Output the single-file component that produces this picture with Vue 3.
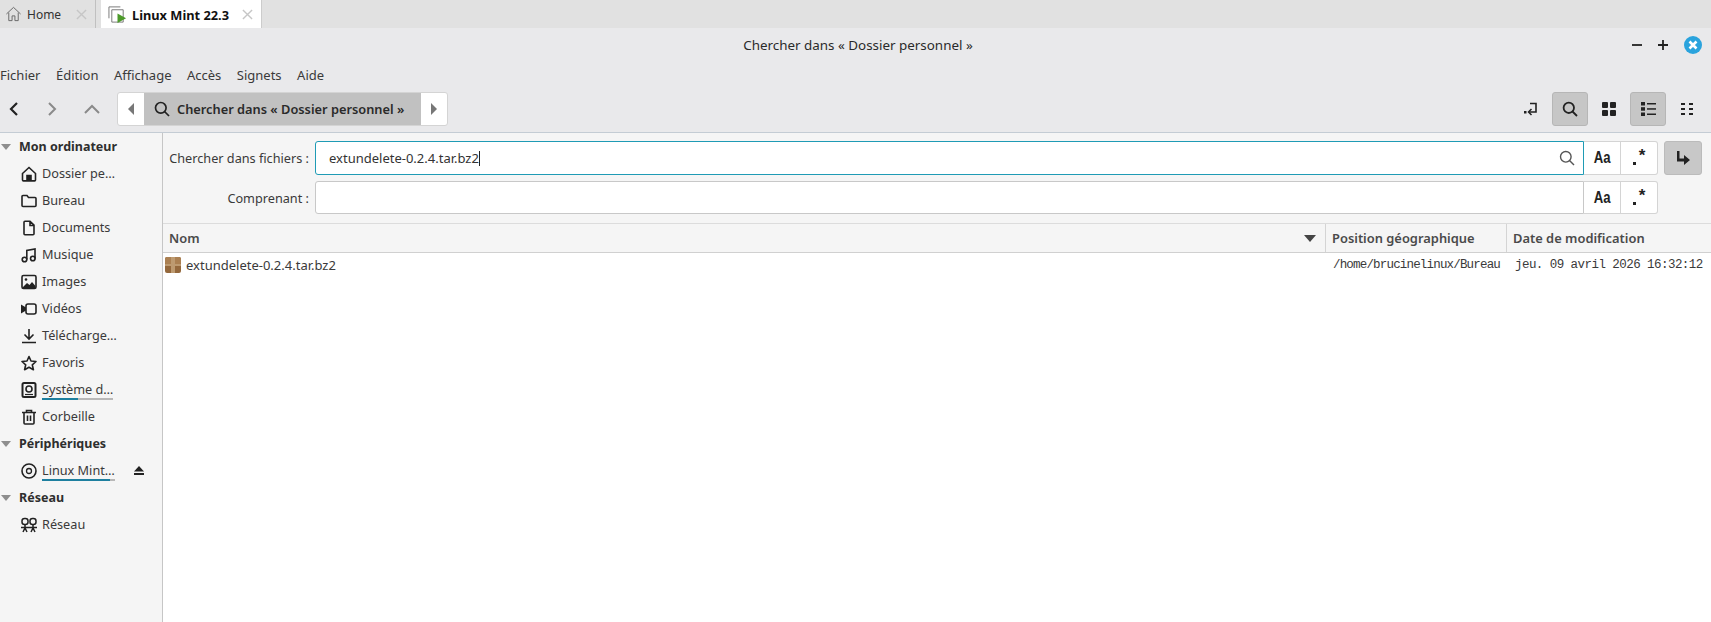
<script setup>
const menus = ['Fichier', 'Édition', 'Affichage', 'Accès', 'Signets', 'Aide']
const places = [
  { label: 'Dossier pe…', icon: 'home' },
  { label: 'Bureau', icon: 'folder' },
  { label: 'Documents', icon: 'doc' },
  { label: 'Musique', icon: 'music' },
  { label: 'Images', icon: 'image' },
  { label: 'Vidéos', icon: 'video' },
  { label: 'Télécharge…', icon: 'download' },
  { label: 'Favoris', icon: 'star' },
  { label: 'Système d…', icon: 'disk', usage: 50 },
  { label: 'Corbeille', icon: 'trash' },
]
</script>

<template>
  <div class="win">
    <div class="tabs">
      <div class="tab home-tab">
        <svg class="ti" viewBox="0 0 18 18" fill="none" stroke="#666" stroke-width="1"><path d="M1.5 9 9 2l7.5 7M4 7.500V16h3.500v-5h3v5H14V7.500"/></svg>
        <span>Home</span>
        <svg class="x" viewBox="0 0 12 12" stroke="#c6c6c6" stroke-width="1.5"><path d="M1 1l10 10M11 1 1 11"/></svg>
      </div>
      <div class="tab active-tab">
        <svg class="ti" viewBox="0 0 20 20" fill="none"><path d="M1 14V2h12" stroke="#777"/><path d="M4 18V5h12v13z" stroke="#777" fill="#fff"/><path d="M10 9l9 5-9 5z" fill="#4c9a2a"/></svg>
        <b>Linux Mint 22.3</b>
        <svg class="x" viewBox="0 0 12 12" stroke="#c6c6c6" stroke-width="1.5"><path d="M1 1l10 10M11 1 1 11"/></svg>
      </div>
    </div>

    <div class="title">
      <span class="title-text">Chercher dans « Dossier personnel »</span>
      <div class="wm">
        <svg viewBox="0 0 10 10" width="10" height="10" stroke="#222" stroke-width="1.8"><path d="M0 5h10"/></svg>
        <svg viewBox="0 0 10 10" width="10" height="10" stroke="#222" stroke-width="1.8"><path d="M0 5h10M5 0v10"/></svg>
        <svg viewBox="0 0 18 18" width="18" height="18"><circle cx="9" cy="9" r="9" fill="#2aa3dd"/><path d="M5.500 5.500l7 7M12.500 5.500l-7 7" stroke="#fff" stroke-width="2.6"/></svg>
      </div>
    </div>

    <div class="menubar"><span v-for="m in menus" :key="m">{{ m }}</span></div>

    <div class="toolbar">
      <div class="nav">
        <svg viewBox="0 0 12 16" width="12" height="16" fill="none" stroke="#222" stroke-width="2.2"><path d="M9 2 3 8l6 6"/></svg>
        <svg viewBox="0 0 12 16" width="12" height="16" fill="none" stroke="#8a8a8a" stroke-width="2"><path d="M3 2l6 6-6 6"/></svg>
        <svg viewBox="0 0 16 10" width="16" height="10" fill="none" stroke="#8a8a8a" stroke-width="2"><path d="M1 9l7-7 7 7"/></svg>
      </div>
      <div class="crumbs">
        <div class="arrow"><svg viewBox="0 0 6 12" width="6" height="12" fill="#777"><path d="M6 0v12L0 6z"/></svg></div>
        <div class="crumb">
          <svg viewBox="0 0 16 16" width="16" height="16" fill="none" stroke="#222" stroke-width="1.7"><circle cx="6.800" cy="6.800" r="5.300"/><path d="M10.500 10.500 15 15"/></svg>
          <span>Chercher dans « Dossier personnel »</span>
        </div>
        <div class="arrow"><svg viewBox="0 0 6 12" width="6" height="12" fill="#777"><path d="M0 0v12l6-6z"/></svg></div>
      </div>
      <div class="tools">
        <button class="tbtn plain"><svg viewBox="0 0 16 16" width="16" height="16" fill="none" stroke="#222" stroke-width="1.6"><path d="M7 2.500h6v8.500H6"/><path d="M8.500 8 5.500 11l3 3" stroke-width="1.5"/><path d="M1 10h2.500v2.500H1z" fill="#222" stroke="none"/></svg></button>
        <button class="tbtn on"><svg viewBox="0 0 16 16" width="16" height="16" fill="none" stroke="#222" stroke-width="1.8"><circle cx="6.800" cy="6.800" r="5.200"/><path d="M10.500 10.500 15 15"/></svg></button>
        <button class="tbtn plain"><svg viewBox="0 0 14 14" width="14" height="14" fill="#222"><rect width="6" height="6" rx="1"/><rect x="8" width="6" height="6" rx="1"/><rect y="8" width="6" height="6" rx="1"/><rect x="8" y="8" width="6" height="6" rx="1"/></svg></button>
        <button class="tbtn on"><svg viewBox="0 0 15 14" width="15" height="14" fill="#222"><rect width="4" height="3.500"/><rect y="5.200" width="4" height="3.500"/><rect y="10.500" width="4" height="3.500"/><rect x="6" y="1" width="9" height="1.500"/><rect x="6" y="6.200" width="9" height="1.500"/><rect x="6" y="11.500" width="9" height="1.500"/></svg></button>
        <button class="tbtn plain"><svg viewBox="0 0 13 12" width="13" height="12" fill="#222"><rect width="4" height="2"/><rect x="8" width="4" height="2"/><rect y="5" width="4" height="2"/><rect x="8" y="5" width="4" height="2"/><rect y="10" width="4" height="2"/><rect x="8" y="10" width="4" height="2"/></svg></button>
      </div>
    </div>

    <div class="body">
      <aside class="side">
        <div class="head"><i class="tri"></i>Mon ordinateur</div>
        <div v-for="p in places" :key="p.label" class="row">
          <svg class="ic" viewBox="0 0 16 16" fill="none" stroke="#222" stroke-width="1.6">
            <template v-if="p.icon === 'home'"><path d="M1.500 7.500 8 1.500l6.500 6V14a.9.9 0 0 1-.9.9H2.400a.9.9 0 0 1-.9-.9z"/><path d="M6 15V9.500h4V15" fill="#222"/></template>
            <path v-else-if="p.icon === 'folder'" d="M1 3.500a1 1 0 0 1 1-1h4l1.500 2H14a1 1 0 0 1 1 1v7a1 1 0 0 1-1 1H2a1 1 0 0 1-1-1z"/>
            <path v-else-if="p.icon === 'doc'" d="M3 2.200a1 1 0 0 1 1-1h5l4 4v8.600a1 1 0 0 1-1 1H4a1 1 0 0 1-1-1zM9 1.500v4h4"/>
            <template v-else-if="p.icon === 'music'"><circle cx="3.500" cy="12.500" r="2.300"/><circle cx="11.800" cy="11.500" r="2.300"/><path d="M5.800 12.500V3.500L14 2v9.500"/></template>
            <template v-else-if="p.icon === 'image'"><rect x="1" y="1.500" width="14" height="13" rx="1.500"/><circle cx="5" cy="5.500" r="1.300" fill="#222" stroke="none"/><path d="M2 13l4-4 2.500 2 2.500-3 3.500 4v2H2z" fill="#222" stroke="none"/></template>
            <template v-else-if="p.icon === 'video'"><rect x="5" y="3" width="10" height="10" rx="2"/><path d="M0 3.500l5 3v3l-5 3z" fill="#222" stroke="none"/></template>
            <path v-else-if="p.icon === 'download'" d="M8 1v9.500M3.500 6.500 8 11l4.500-4.500M1 14.500h14"/>
            <path v-else-if="p.icon === 'star'" d="M8 1.500l2 4.500 5 .5-3.700 3.300 1.100 4.900L8 12.200l-4.400 2.500 1.100-4.900L1 6.500 6 6z" stroke-linejoin="round"/>
            <template v-else-if="p.icon === 'disk'"><rect x="1.500" y="1" width="13" height="14" rx="1.500" stroke-width="2"/><circle cx="8" cy="7" r="3"/><path d="M4 12.500h8" stroke-width="1.2"/></template>
            <path v-else d="M1 3.500h14M5.500 3.500V1.500h5v2M3 3.500V14a1 1 0 0 0 1 1h8a1 1 0 0 0 1-1V3.500M6.500 6.500v5.500M9.500 6.500v5.500"/>
          </svg>
          <span class="lbl">{{ p.label }}<em v-if="p.usage" class="use"><u :style="{ width: p.usage + '%' }"></u></em></span>
        </div>
        <div class="head"><i class="tri"></i>Périphériques</div>
        <div class="row">
          <svg class="ic" viewBox="0 0 16 16" fill="none" stroke="#222" stroke-width="1.6"><circle cx="8" cy="8" r="7"/><circle cx="8" cy="8" r="2.500" stroke-width="1.3"/></svg>
          <span class="lbl">Linux Mint…<em class="use"><u style="width: 94%"></u></em></span>
          <svg class="eject" viewBox="0 0 10 9" width="10" height="9" fill="#222"><path d="M5 0l5 5.500H0z"/><rect y="7" width="10" height="2"/></svg>
        </div>
        <div class="head"><i class="tri"></i>Réseau</div>
        <div class="row">
          <svg class="ic" viewBox="0 0 16 16" fill="none" stroke="#222" stroke-width="1.5"><rect x="1" y="1.500" width="6" height="6" rx="2.500"/><rect x="9" y="1.500" width="6" height="6" rx="2.500"/><path d="M4 7.500v3M12 7.500v3M0 10.500h16M2 15l2-4 2 4M10 15l2-4 2 4"/></svg>
          <span class="lbl">Réseau</span>
        </div>
      </aside>

      <main class="main">
        <div class="search">
          <div class="sline first">
            <label>Chercher dans fichiers :</label>
            <div class="field focus">
              <span class="val">extundelete-0.2.4.tar.bz2<i class="caret"></i></span>
              <svg viewBox="0 0 16 16" width="16" height="16" fill="none" stroke="#555" stroke-width="1.4"><circle cx="6.800" cy="6.800" r="5.300"/><path d="M10.500 10.500 15 15"/></svg>
            </div>
            <div class="opt"><span class="aa">Aa</span></div><div class="opt last"><span class="dot"></span><span class="star">*</span></div>
            <button class="go"><svg viewBox="0 0 14 14" width="14" height="14" fill="#222"><path d="M1 0h2.500v7.500H8V4l6 5-6 5v-3.500H1z"/></svg></button>
          </div>
          <div class="sline">
            <label>Comprenant :</label>
            <div class="field"></div>
            <div class="opt"><span class="aa">Aa</span></div><div class="opt last"><span class="dot"></span><span class="star">*</span></div>
            <span class="go-space"></span>
          </div>
        </div>
        <div class="cols">
          <div class="col c1"><span>Nom</span><svg viewBox="0 0 12 7" width="12" height="7" fill="#444"><path d="M0 0h12L6 7z"/></svg></div>
          <div class="col c2">Position géographique</div>
          <div class="col c3">Date de modification</div>
        </div>
        <div class="file">
          <div class="c1 cell">
            <svg class="pkg" viewBox="0 0 16 16"><rect width="16" height="16" rx="2" fill="#94683c"/><rect width="16" height="8" rx="2" fill="#ab8052"/><rect x="6" width="4" height="16" fill="#bd9a70"/><rect y="7" width="16" height="2" fill="#bd9a70"/></svg>
            <span>extundelete-0.2.4.tar.bz2</span>
          </div>
          <div class="c2 cell mono path">/home/brucinelinux/Bureau</div>
          <div class="c3 cell mono date">jeu. 09 avril 2026 16:32:12</div>
        </div>
      </main>
    </div>
  </div>
</template>

<style>
html, body { margin: 0; background: #fff; }
</style>
<style scoped>
.win { width: 1711px; height: 622px; display: flex; flex-direction: column; overflow: hidden; background: #e9e9eb; color: #2e2e2e; font: 13px "Noto Sans", sans-serif; }
.tabs { height: 28px; background: #e1e1e1; display: flex; align-items: flex-start; flex: none; }
.tab { display: flex; align-items: center; box-sizing: border-box; }
.home-tab { width: 96px; height: 28px; padding-left: 5px; border-right: 1px solid #c0c0c0; margin-right: 5px; color: #333; font-size: 12px; gap: 5px; }
.active-tab { width: 161px; height: 29px; padding-left: 7px; background: #fff; border-right: 1px solid #ccc; font-size: 12.8px; color: #111; gap: 5px; position: relative; }
.ti { width: 17px; height: 18px; flex: none; }
.active-tab .ti { width: 19px; height: 19px; }
.x { width: 11px; height: 11px; flex: none; margin-left: auto; margin-right: 8px; }
.title { height: 32px; flex: none; display: flex; align-items: center; justify-content: center; position: relative; background: #e9e9eb; padding-left: 5px; box-sizing: border-box; }
.title-text { font-size: 13.4px; color: #2a2a2a; padding-top: 1px; }
.wm { position: absolute; right: 9px; top: 8px; display: flex; align-items: center; gap: 16px; }
.menubar { height: 31px; flex: none; display: flex; align-items: center; gap: 15.5px; font-size: 13px; color: #3a3a3a; padding-bottom: 2px; box-sizing: border-box; }
.toolbar { height: 42px; flex: none; display: flex; align-items: center; border-bottom: 1px solid #c4ccd4; padding-bottom: 5px; box-sizing: border-box; }
.nav { width: 117px; display: flex; align-items: center; padding-left: 8px; box-sizing: border-box; gap: 26px; flex: none; }
.crumbs { height: 34px; width: 331px; display: flex; align-items: stretch; background: #fff; border-radius: 3px; border: 1px solid #d4d4d4; box-sizing: border-box; flex: none; }
.arrow { width: 26px; display: flex; align-items: center; justify-content: center; flex: none; }
.crumb { flex: 1; background: #c1c1c1; display: flex; align-items: center; gap: 7px; padding-left: 10px; font-weight: 600; font-size: 12.8px; color: #2a2a2a; white-space: nowrap; }
.tools { margin-left: auto; margin-right: 6px; display: flex; align-items: center; gap: 3px; }
.tbtn { width: 36px; height: 34px; border: 1px solid transparent; background: none; border-radius: 3px; display: flex; align-items: center; justify-content: center; padding: 0; box-sizing: border-box; }
.tbtn.on { background: #c6c6c6; border-color: #b6b6b6; }
.body { flex: 1; display: flex; min-height: 0; background: #fff; }
.side { width: 163px; flex: none; box-sizing: border-box; background: #f5f5f5; border-right: 1px solid #c6c6c6; }
.head { height: 27px; display: flex; align-items: center; font-weight: 700; font-size: 12.5px; color: #2e2e2e; }
.tri { width: 0; height: 0; border: 5px solid transparent; border-top: 6px solid #8e8e8e; border-bottom: 0; margin: 0 8px 0 1px; }
.row { height: 27px; display: flex; align-items: center; padding-left: 21px; color: #3a3a3a; font-size: 12.7px; position: relative; }
.ic { width: 16px; height: 16px; flex: none; margin-right: 5px; }
.lbl { white-space: nowrap; position: relative; margin-top: -1px; }
.use { position: absolute; left: 0; right: 0; bottom: -2px; height: 2px; background: #b8b8b8; display: block; }
.use u { display: block; height: 2px; background: #1d7f9f; }
.eject { position: absolute; left: 134px; top: 9px; }
.main { flex: 1; min-width: 0; display: flex; flex-direction: column; }
.search { background: #f5f5f5; height: 90px; flex: none; box-sizing: border-box; padding-top: 8px; display: flex; flex-direction: column; gap: 6px; }
.sline { display: flex; height: 33px; align-items: stretch; padding-right: 9px; }
.sline.first { height: 34px; }
.sline label { width: 152px; flex: none; display: flex; align-items: center; justify-content: flex-end; font-size: 12.7px; color: #3a3a3a; padding-right: 6px; box-sizing: border-box; white-space: nowrap; }
.field { flex: 1; background: #fff; border: 1px solid #c8c8c8; border-radius: 3px 0 0 3px; display: flex; align-items: center; justify-content: space-between; padding: 0 8px 0 13px; box-sizing: border-box; }
.field.focus { border-color: #1f9bb5; }
.val { font-size: 13px; color: #333; }
.caret { display: inline-block; width: 1px; height: 15px; background: #222; vertical-align: -3px; }
.opt { width: 37px; background: #fff; border: 1px solid #d4d4d4; border-left: 0; display: flex; align-items: center; justify-content: center; color: #222; box-sizing: border-box; flex: none; position: relative; }
.opt.last { border-radius: 0 3px 3px 0; }
.aa { display: inline-block; font: 600 16px "Liberation Sans", sans-serif; transform: scaleX(.82); }
.dot { width: 3px; height: 3px; background: #222; margin: 11px 3px 0 0; }
.star { font: 700 17px "Liberation Sans", sans-serif; line-height: 1; margin-top: -5px; }
.go { width: 38px; margin-left: 6px; background: #c8c8c8; border: 1px solid #bbb; border-radius: 3px; display: flex; align-items: center; justify-content: center; padding: 0; box-sizing: border-box; flex: none; }
.go-space { width: 38px; margin-left: 6px; flex: none; }
.cols { height: 30px; flex: none; display: flex; background: #f5f5f5; border-top: 1px solid #dcdcdc; border-bottom: 1px solid #d0d0d0; box-sizing: border-box; font-weight: 600; font-size: 12.9px; color: #4a4a4a; }
.col { display: flex; align-items: center; padding-left: 6px; box-sizing: border-box; border-right: 1px solid #d4d4d4; white-space: nowrap; }
.col.c1 { justify-content: space-between; padding-right: 9px; }
.c1 { width: 1163px; flex: none; }
.c2 { width: 181px; flex: none; }
.c3 { flex: 1; }
.col.c3 { border-right: 0; }
.file { height: 23px; display: flex; align-items: center; color: #3a3a3a; }
.cell { display: flex; align-items: center; padding-left: 6px; box-sizing: border-box; white-space: nowrap; font-size: 13px; }
.c1.cell { padding-left: 2px; gap: 5px; }
.pkg { width: 16px; height: 16px; flex: none; }
.mono { font-family: "Liberation Mono", monospace; font-size: 12.5px; }
.path { padding-left: 7px; letter-spacing: -0.82px; }
.date { padding-left: 8px; letter-spacing: -0.55px; }
</style>
